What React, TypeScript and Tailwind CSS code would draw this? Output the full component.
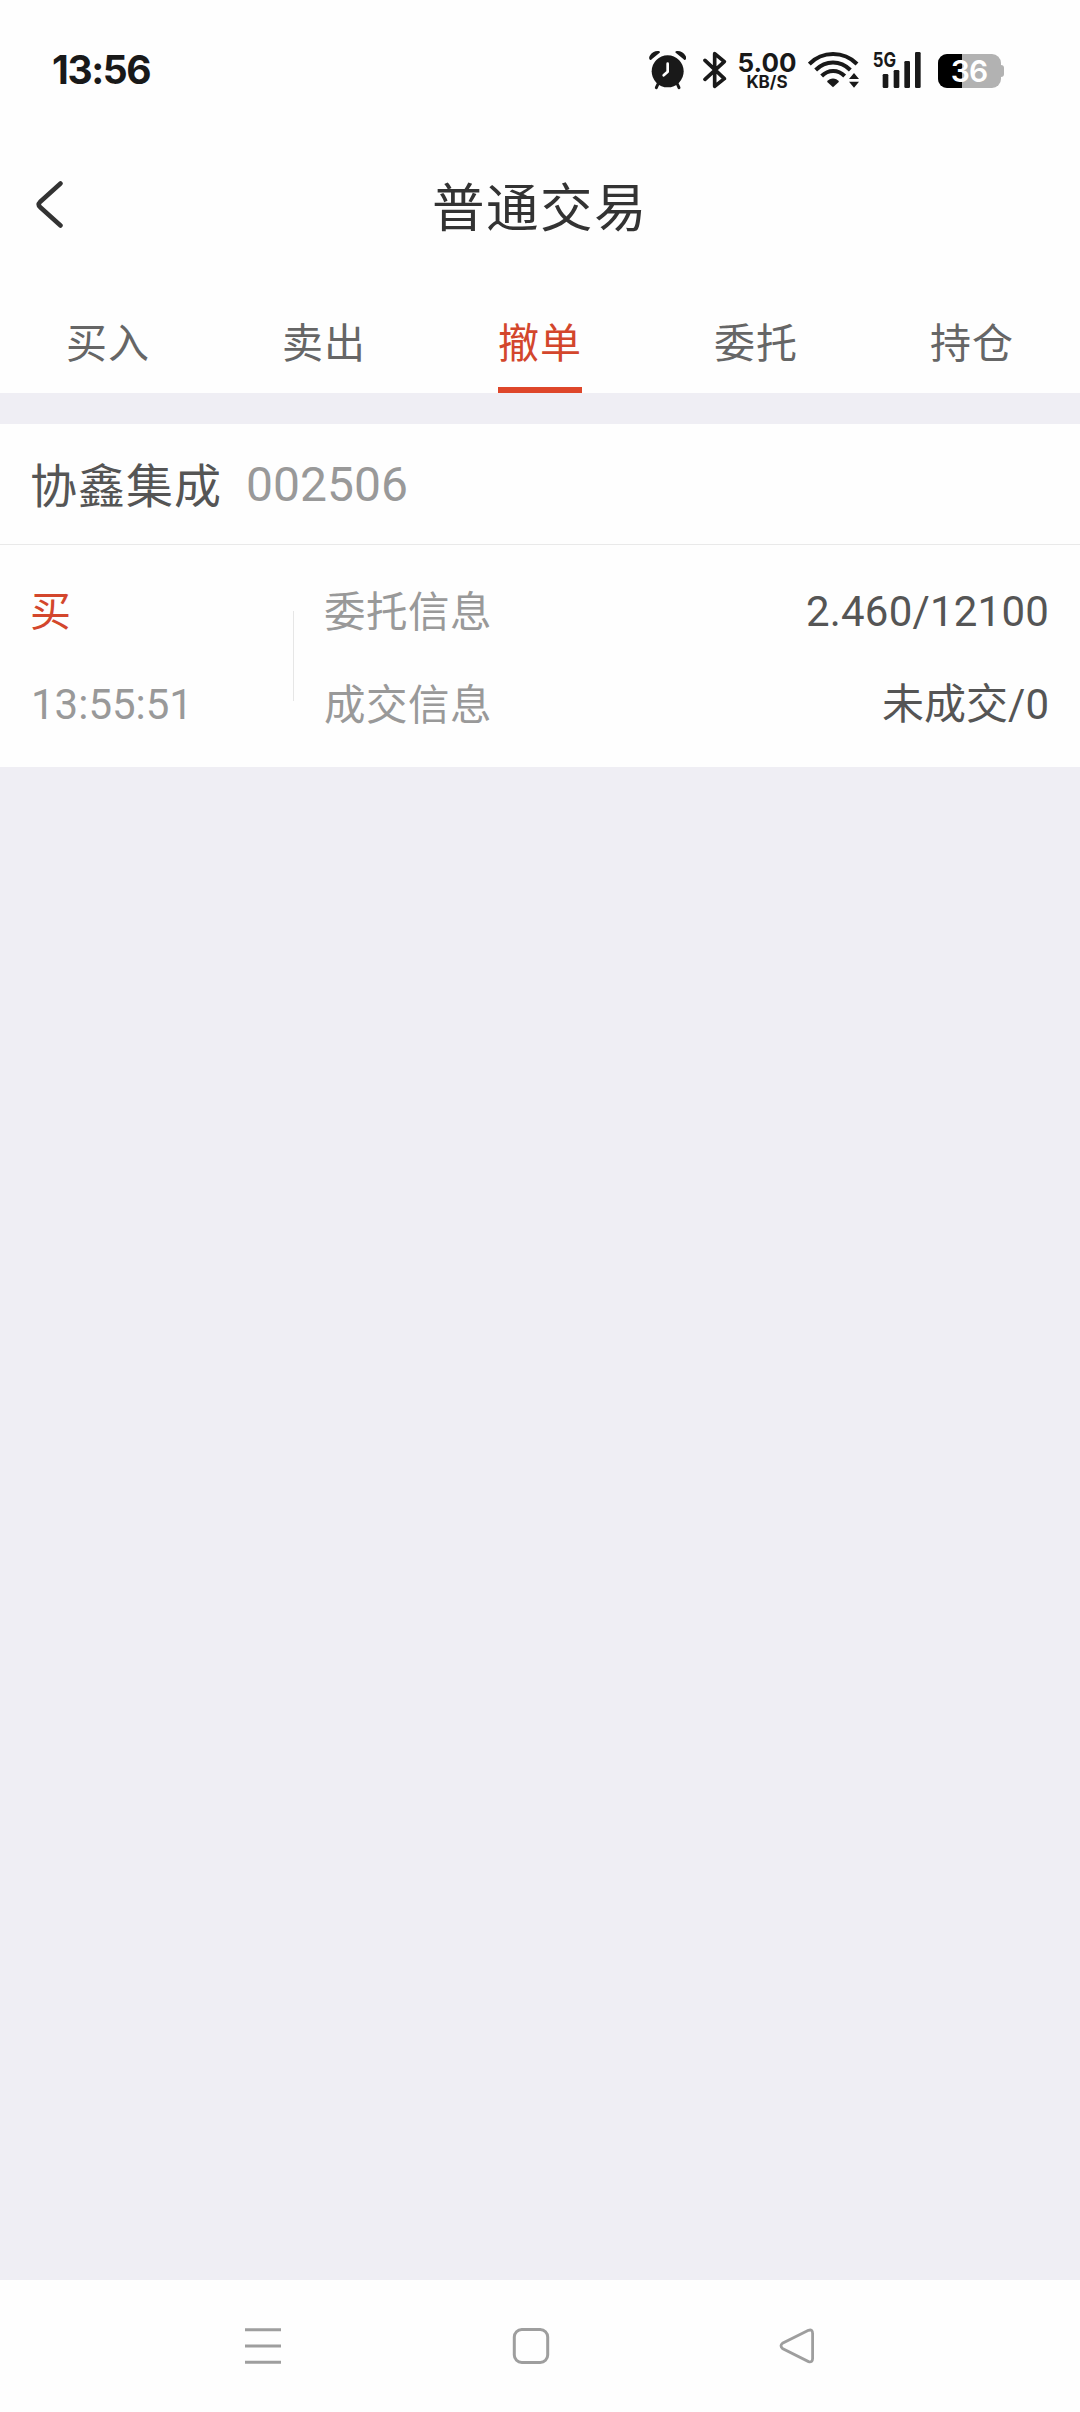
import clsx from 'clsx'

const tabs = ['买入', '卖出', '撤单', '委托', '持仓']

const orders = [
  {
    name: '协鑫集成',
    code: '002506',
    side: '买',
    time: '13:55:51',
    price: '2.460/12100',
    deal: '未成交/0',
  },
]

function AlarmIcon() {
  return (
    <svg width="37" height="40" viewBox="57 60 111 120" fill="none" stroke="#191919" strokeLinecap="round">
      <circle cx="113" cy="124" r="48" fill="#191919" stroke="none" />
      <path d="M61 90Q55 86 59 78C65 66 76 62 86 63Q93 65 88 69L66 87Q63 91 61 90Z" fill="#191919" stroke="none" />
      <path d="M165 90Q171 86 167 78C161 66 150 62 140 63Q133 65 138 69L160 87Q163 91 165 90Z" fill="#191919" stroke="none" />
      <path d="M84 162L79 173M142 162L147 173" strokeWidth="9" />
      <path d="M113 101V125L101 136" stroke="#fff" strokeWidth="8" strokeLinejoin="round" />
    </svg>
  )
}

function BluetoothIcon() {
  return (
    <svg width="24" height="40" viewBox="219 60 72 120" fill="none" stroke="#191919" strokeWidth="11">
      <path d="M225 91L283 146L254 169V71L283 95L225 148" strokeLinecap="round" strokeLinejoin="round" />
    </svg>
  )
}

function WifiIcon() {
  return (
    <svg width="52" height="40" viewBox="24 60 156 120" fill="none" stroke="#191919" strokeWidth="12">
      <path d="M28 102C67 62 131 62 171 102" />
      <path d="M47 120C77 90 121 90 151 120" />
      <path d="M65 138C85 118 114 118 134 138" />
      <path d="M99 172L81 155C90 142 108 142 117 155Z" fill="#191919" stroke="none" />
      <path d="M162 129L177 147H147ZM162 173L177 155H147Z" fill="#191919" stroke="none" />
    </svg>
  )
}

function SignalIcon() {
  return (
    <svg className="overflow-visible" width="49" height="40" viewBox="219 60 147 120" fill="#191919">
      <text
        x="218"
        y="110"
        textLength="70"
        lengthAdjust="spacingAndGlyphs"
        className="font-[Inter,sans-serif] text-[62px] font-bold"
      >
        5G
      </text>
      <rect x="248" y="132" width="17" height="42" rx="4" />
      <rect x="281" y="120" width="17" height="54" rx="4" />
      <rect x="313" y="93" width="17" height="81" rx="4" />
      <rect x="345" y="66" width="17" height="108" rx="4" />
    </svg>
  )
}

function BatteryIcon() {
  return (
    <div className="relative mt-[2px] flex h-[34px] w-[66px] items-center">
      <div className="flex h-full w-[63px] overflow-hidden rounded-[9px] bg-[#b2b2b2]">
        <div className="w-6 bg-black" />
      </div>
      <div className="h-3 w-[3px] rounded-r-[3px] bg-[#b2b2b2]" />
      <span className="absolute inset-y-0 left-0 w-[62px] text-center text-[30px] leading-[35px] font-semibold tracking-[-1px] text-white">
        36
      </span>
    </div>
  )
}

function StatusBar() {
  return (
    <div className="flex h-[140px] items-start pt-[50px] pr-[76px] pl-[52px] font-[Inter,sans-serif] text-[#191919]">
      <span className="text-[39px] leading-[40px] font-bold tracking-[-1.4px]">13:56</span>
      <div className="ml-auto flex h-10 items-center">
        <AlarmIcon />
        <div className="ml-[17px]">
          <BluetoothIcon />
        </div>
        <div className="ml-[10px] flex w-[60px] flex-col items-center">
          <span className="text-[26px] leading-[24px] font-bold">5.00</span>
          <span className="text-[17px] leading-[15px] font-bold">KB/S</span>
        </div>
        <div className="ml-[11px]">
          <WifiIcon />
        </div>
        <div className="ml-[13px]">
          <SignalIcon />
        </div>
        <div className="ml-4">
          <BatteryIcon />
        </div>
      </div>
    </div>
  )
}

function Header() {
  return (
    <header className="grid h-[130px] grid-cols-[1fr_auto_1fr] items-center px-9">
      <button aria-label="返回">
        <svg width="28" height="48" viewBox="36 180.5 28 48" fill="none" stroke="#333" strokeWidth="4.5">
          <path d="M60.5 183L40 201.5Q37.5 204 40 206.5L60.5 225" strokeLinecap="round" />
        </svg>
      </button>
      <h1 className="pt-[7px] text-[52.5px] leading-[60px] tracking-[1.5px] text-[#333]">普通交易</h1>
    </header>
  )
}

function Tabs({ active }: { active: string }) {
  return (
    <nav className="grid h-[123px] grid-cols-5">
      {tabs.map((tab) => (
        <button key={tab} className="flex flex-col items-center">
          <span
            className={clsx(
              'flex h-full items-center border-b-[6px] pt-[32px] text-[41px] tracking-[1px]',
              tab === active ? 'border-[#de462a] text-[#d3462c]' : 'border-transparent text-[#666]',
            )}
          >
            {tab}
          </span>
        </button>
      ))}
    </nav>
  )
}

function OrderCard({ order }: { order: (typeof orders)[number] }) {
  return (
    <section className="bg-[#fefefe]">
      <div className="flex h-[121px] items-start border-b border-[#e9e9e9] px-[30px] text-[48px] leading-[122px]">
        <span className="w-[216px] pt-[2px] text-[47px] tracking-[1px] text-[#555]">{order.name}</span>
        <span className="text-[#999]">{order.code}</span>
      </div>
      <div className="flex h-[222px] items-start px-[31px] pt-[20px] text-[42px] leading-[93px] text-[#999]">
        <div className="w-[262px]">
          <div className="-ml-px h-[93px] pt-px text-[41px] text-[#d3462c]">{order.side}</div>
          <div>{order.time}</div>
        </div>
        <div className="mt-[46px] h-[90px] w-px bg-[#e6e6e6]" />
        <div className="ml-[30px] pt-px text-[41.5px] tracking-[0.5px]">
          <div>委托信息</div>
          <div>成交信息</div>
        </div>
        <div className="ml-auto text-right text-[#555]">
          <div className="tracking-[0.2px]">{order.price}</div>
          <div>{order.deal}</div>
        </div>
      </div>
    </section>
  )
}

function NavBar() {
  return (
    <footer className="flex h-[132px] items-start bg-[#fefefe] pt-12 pl-[244px]">
      <svg width="38" height="37" viewBox="244 2328 38 37" stroke="#9e9e9e" strokeWidth="3">
        <path d="M245 2329.8H281M245 2346H281M245 2362.3H281" />
      </svg>
      <svg className="ml-[230px]" width="38" height="37" viewBox="512 2328 38 37" fill="none" stroke="#9e9e9e" strokeWidth="3">
        <rect x="514.3" y="2329.5" width="33.4" height="33" rx="7.5" />
      </svg>
      <svg className="ml-[229px]" width="36" height="37" viewBox="779 2328 36 37" fill="none" stroke="#9e9e9e" strokeWidth="2.8">
        <path d="M808.5 2330.3L782.5 2343.2Q779.5 2345.8 782.5 2348.6L808.5 2361.6Q812.6 2362.6 812.6 2358.5V2333.5Q812.6 2329 808.5 2330.3Z" />
      </svg>
    </footer>
  )
}

export default function App() {
  return (
    <div className="flex h-[2412px] w-[1080px] flex-col bg-[#efeef4] font-[Roboto,'Noto_Sans_CJK_SC',sans-serif]">
      <div className="bg-[#fefefe]">
        <StatusBar />
        <Header />
        <Tabs active="撤单" />
      </div>
      <main className="flex-1 pt-[31px]">
        {orders.map((order) => (
          <OrderCard key={order.code} order={order} />
        ))}
      </main>
      <NavBar />
    </div>
  )
}
